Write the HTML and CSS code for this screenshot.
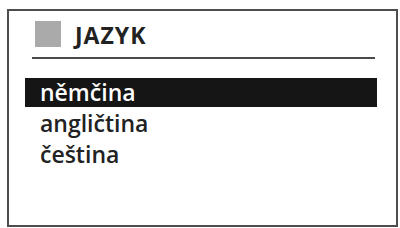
FILE: index.html
```html
<!DOCTYPE html>
<html lang="cs">
<head>
<meta charset="utf-8">
<link rel="stylesheet" href="styles.css">
</head>
<body>
<div class="frame">
  <div class="header">
    <span class="icon"></span>
    <span class="title">JAZYK</span>
  </div>
  <div class="rule"></div>
  <ul class="list">
    <li class="item selected">němčina</li>
    <li class="item">angličtina</li>
    <li class="item">čeština</li>
  </ul>
</div>
</body>
</html>
```
FILE: styles.css
```css
html, body {
  margin: 0;
  padding: 0;
  background: #ffffff;
}
body {
  width: 400px;
  height: 228px;
  overflow: hidden;
  font-family: "Open Sans", "DejaVu Sans", sans-serif;
  color: #222222;
}
.frame {
  box-sizing: border-box;
  margin: 9px 2px 0 7px;
  height: 218px;
  border: 2px solid #4d4d4d;
  padding-top: 10px;
}
.header {
  display: flex;
  align-items: center;
  height: 26px;
  padding-left: 26px;
}
.icon {
  width: 26px;
  height: 26px;
  background: #aaaaaa;
  flex: none;
}
.title {
  margin-left: 14px;
  font-size: 23px;
  font-weight: 700;
  line-height: 26px;
  position: relative;
  top: 1px;
  letter-spacing: 1px;
}
.rule {
  height: 2px;
  background: #4a4a4a;
  margin: 10px 21px 0 23px;
}
.list {
  list-style: none;
  margin: 19px 19px 0 16px;
  padding: 0;
  display: flex;
  flex-direction: column;
  gap: 2px;
}
.item {
  height: 29px;
  line-height: 29px;
  font-size: 23px;
  font-weight: 600;
  padding-left: 15px;
}
.item.selected {
  background: #151515;
  color: #ffffff;
}
```
